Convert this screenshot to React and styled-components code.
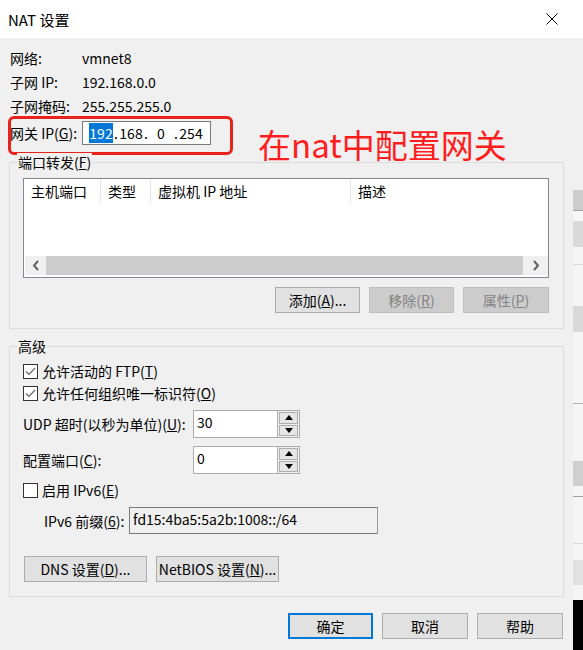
import React from 'react';
import styled, { createGlobalStyle } from 'styled-components';

const FONT = '"Noto Sans CJK SC", "Liberation Sans", sans-serif';

const GlobalStyle = createGlobalStyle`
  html, body {
    margin: 0;
    padding: 0;
    background: #f0f0f0;
  }
  body {
    font-family: ${FONT};
    font-size: 14px;
    color: #000;
  }
`;

const Screen = styled.div`
  width: 583px;
  height: 650px;
  display: flex;
  overflow: hidden;
`;

const Dialog = styled.div`
  width: 573px;
  display: flex;
  flex-direction: column;
  background: #f0f0f0;
`;

const TitleBar = styled.div`
  height: 38px;
  flex: 0 0 38px;
  background: #fff;
  display: flex;
  align-items: center;
  justify-content: space-between;
  padding: 0 15px 0 8px;
  box-sizing: border-box;
`;

const Title = styled.div`
  font-size: 15px;
  line-height: 20px;
  padding-top: 1px;
`;

const CloseIcon = styled.svg`
  width: 12px;
  height: 12px;
  display: block;
`;

const Body = styled.div`
  position: relative;
  flex: 1;
  display: flex;
  flex-direction: column;
  padding: 8px 9px 0 9px;
`;

const InfoRow = styled.div`
  display: flex;
  align-items: center;
  height: 24px;
  padding-left: 1px;
  line-height: 20px;
`;

const InfoLabel = styled.div`
  width: 72px;
  flex: 0 0 72px;
`;

const GatewayRow = styled(InfoRow)`
  margin-top: 3px;
`;

const IpField = styled.div`
  width: 129px;
  height: 24px;
  box-sizing: border-box;
  border: 1px solid #7a7a7a;
  background: #fff;
  display: flex;
  align-items: center;
  padding-left: 6px;
`;

const Octet = styled.span`
  width: 24px;
  text-align: center;
`;

const Dot = styled.span`
  width: 6px;
  text-align: center;
`;

const Selected = styled.span`
  background: #0078d7;
  color: #fff;
`;

const Highlight = styled.div`
  position: absolute;
  left: 8px;
  top: 78px;
  width: 225px;
  height: 39px;
  box-sizing: border-box;
  border: 3px solid #e8231c;
  border-radius: 6px;
`;

const Note = styled.div`
  position: absolute;
  left: 258px;
  top: 90px;
  font-size: 33px;
  line-height: 33px;
  color: #ff1d1d;
  white-space: nowrap;
`;

const Group = styled.div`
  position: relative;
  margin-top: 17px;
  border: 1px solid #dcdcdc;
  padding: ${(p) => p.$pad};
  display: flex;
  flex-direction: column;
`;

const GroupTitle = styled.div`
  position: absolute;
  top: -10px;
  left: 7px;
  padding: 0 1px;
  background: #f0f0f0;
  line-height: 18px;
`;

const ListView = styled.div`
  height: 100px;
  box-sizing: border-box;
  border: 1px solid #828790;
  background: #fff;
  display: flex;
  flex-direction: column;
`;

const Header = styled.div`
  height: 24px;
  display: flex;
`;

const HeadCell = styled.div`
  width: ${(p) => (p.$w ? `${p.$w}px` : 'auto')};
  flex: ${(p) => (p.$w ? `0 0 ${p.$w}px` : '1')};
  box-sizing: border-box;
  border-right: ${(p) => (p.$w ? '1px solid #e5e5e5' : 'none')};
  padding-left: 7px;
  display: flex;
  align-items: center;
  white-space: nowrap;
`;

const ListSpacer = styled.div`
  flex: 1;
`;

const ScrollBar = styled.div`
  height: 19px;
  margin: 0 0 2px 1px;
  display: flex;
`;

const ScrollArrow = styled.div`
  width: ${(p) => p.$w}px;
  background: #f0f0f0;
  display: flex;
  align-items: center;
  justify-content: center;
`;

const ScrollThumb = styled.div`
  flex: 1;
  background: #cdcdcd;
`;

const ButtonRow = styled.div`
  margin-top: ${(p) => p.$mt || 0}px;
  display: flex;
  justify-content: ${(p) => p.$justify || 'flex-end'};
  gap: 9px;
  padding: ${(p) => p.$pad || '0'};
`;

const Button = styled.button`
  width: ${(p) => p.$w}px;
  height: 26px;
  box-sizing: border-box;
  margin: 0;
  padding: 0;
  font-family: ${FONT};
  font-size: 14px;
  line-height: 20px;
  color: ${(p) => (p.disabled ? '#838383' : '#000')};
  background: ${(p) => (p.disabled ? '#cccccc' : '#e1e1e1')};
  border: ${(p) =>
    p.$primary ? '2px solid #0078d7' : p.disabled ? '1px solid #bfbfbf' : '1px solid #adadad'};
  display: flex;
  align-items: center;
  justify-content: center;
`;

const CheckRow = styled.label`
  display: flex;
  align-items: center;
  height: 22px;
  gap: 4px;
  margin-top: ${(p) => p.$mt || 0}px;
  line-height: 20px;
`;

const Box = styled.span`
  width: 15px;
  height: 15px;
  box-sizing: border-box;
  border: 1px solid #333;
  background: #fff;
  display: flex;
  align-items: center;
  justify-content: center;
`;

const FieldRow = styled.div`
  display: flex;
  align-items: center;
  margin-top: ${(p) => p.$mt}px;
  padding-left: ${(p) => p.$indent || 0}px;
  line-height: 20px;
`;

const FieldLabel = styled.div`
  width: ${(p) => p.$w}px;
  flex: 0 0 ${(p) => p.$w}px;
  white-space: nowrap;
`;

const SpinBox = styled.div`
  width: 107px;
  height: 28px;
  box-sizing: border-box;
  border: 1px solid #adadad;
  display: flex;
  background: #f0f0f0;
`;

const SpinInput = styled.div`
  flex: 1;
  background: #fff;
  border-right: 1px solid #adadad;
  padding: 1px 0 0 3px;
`;

const SpinButtons = styled.div`
  width: 21px;
  display: flex;
  flex-direction: column;
  gap: 1px;
  padding: 1px;
  box-sizing: border-box;
`;

const SpinButton = styled.div`
  flex: 1;
  border: 1px solid #adadad;
  background: #e6e6e6;
  display: flex;
  align-items: center;
  justify-content: center;
`;

const PrefixBox = styled.div`
  width: 249px;
  height: 27px;
  box-sizing: border-box;
  border: 1px solid #7a7a7a;
  border-right-color: #9a9a9a;
  background: #f0f0f0;
  padding: 1px 3px;
  white-space: nowrap;
`;

const Backdrop = styled.div`
  width: 10px;
  display: flex;
  flex-direction: column;
`;

const Strip = styled.div`
  height: ${(p) => p.$h}px;
  flex: 0 0 ${(p) => p.$h}px;
  background: ${(p) => p.$c};
`;

const strips = [
  [38, '#ffffff'],
  [152, '#f0f0f0'],
  [20, '#cdcdcd'],
  [1, '#a0a0a0'],
  [10, '#f7f7f7'],
  [26, '#d9d9d9'],
  [17, '#f5f5f5'],
  [1, '#dcdcdc'],
  [41, '#f5f5f5'],
  [26, '#d9d9d9'],
  [71, '#f5f5f5'],
  [1, '#b0b0b0'],
  [57, '#f5f5f5'],
  [25, '#cfcfcf'],
  [10, '#f5f5f5'],
  [1, '#a0a0a0'],
  [46, '#f5f5f5'],
  [1, '#dcdcdc'],
  [16, '#f5f5f5'],
  [25, '#e1e1e1'],
  [15, '#f5f5f5'],
  [50, '#000000'],
];

const Chevron = ({ dir }) => (
  <svg width="8" height="11" viewBox="0 0 8 11">
    <polyline
      points={dir === 'left' ? '6,1 2,5.5 6,10' : '2,1 6,5.5 2,10'}
      fill="none"
      stroke="#606060"
      strokeWidth="2"
    />
  </svg>
);

const Tri = ({ up }) => (
  <svg width="8" height="5" viewBox="0 0 8 5">
    <polygon points={up ? '0,5 8,5 4,0' : '0,0 8,0 4,5'} fill="#000" />
  </svg>
);

const Check = ({ on }) =>
  on ? (
    <svg width="13" height="13" viewBox="0 0 13 13">
      <polyline points="2,6.5 5,9.5 11,3" fill="none" stroke="#666" strokeWidth="1.2" />
    </svg>
  ) : null;

const Spin = ({ value }) => (
  <SpinBox>
    <SpinInput>{value}</SpinInput>
    <SpinButtons>
      <SpinButton>
        <Tri up />
      </SpinButton>
      <SpinButton>
        <Tri />
      </SpinButton>
    </SpinButtons>
  </SpinBox>
);

export default function App() {
  return (
    <>
      <GlobalStyle />
      <Screen>
        <Dialog>
          <TitleBar>
            <Title>NAT 设置</Title>
            <CloseIcon viewBox="0 0 12 12">
              <path d="M0.5 0.5 L11.5 11.5 M11.5 0.5 L0.5 11.5" stroke="#000" strokeWidth="1" />
            </CloseIcon>
          </TitleBar>
          <Body>
            <InfoRow>
              <InfoLabel>网络:</InfoLabel>
              <span>vmnet8</span>
            </InfoRow>
            <InfoRow>
              <InfoLabel>子网 IP:</InfoLabel>
              <span>192.168.0.0</span>
            </InfoRow>
            <InfoRow>
              <InfoLabel>子网掩码:</InfoLabel>
              <span>255.255.255.0</span>
            </InfoRow>
            <GatewayRow>
              <InfoLabel>
                网关 IP(<u>G</u>):
              </InfoLabel>
              <IpField>
                <Octet>
                  <Selected>192</Selected>
                </Octet>
                <Dot>.</Dot>
                <Octet>168</Octet>
                <Dot>.</Dot>
                <Octet>0</Octet>
                <Dot>.</Dot>
                <Octet>254</Octet>
              </IpField>
            </GatewayRow>
            <Highlight />
            <Note>在nat中配置网关</Note>

            <Group $pad="15px 14px 15px 13px">
              <GroupTitle>
                端口转发(<u>F</u>)
              </GroupTitle>
              <ListView>
                <Header>
                  <HeadCell $w={77}>主机端口</HeadCell>
                  <HeadCell $w={50}>类型</HeadCell>
                  <HeadCell $w={200}>虚拟机 IP 地址</HeadCell>
                  <HeadCell>描述</HeadCell>
                </Header>
                <ListSpacer />
                <ScrollBar>
                  <ScrollArrow $w={21}>
                    <Chevron dir="left" />
                  </ScrollArrow>
                  <ScrollThumb />
                  <ScrollArrow $w={25}>
                    <Chevron dir="right" />
                  </ScrollArrow>
                </ScrollBar>
              </ListView>
              <ButtonRow $mt={9}>
                <Button $w={85}>
                  添加(<u>A</u>)...
                </Button>
                <Button $w={85} disabled>
                  移除(<u>R</u>)
                </Button>
                <Button $w={86} disabled>
                  属性(<u>P</u>)
                </Button>
              </ButtonRow>
            </Group>

            <Group $pad="13px 14px 14px 13px">
              <GroupTitle>高级</GroupTitle>
              <CheckRow>
                <Box>
                  <Check on />
                </Box>
                <span>
                  允许活动的 FTP(<u>T</u>)
                </span>
              </CheckRow>
              <CheckRow>
                <Box>
                  <Check on />
                </Box>
                <span>
                  允许任何组织唯一标识符(<u>O</u>)
                </span>
              </CheckRow>
              <FieldRow $mt={6}>
                <FieldLabel $w={170}>
                  UDP 超时(以秒为单位)(<u>U</u>):
                </FieldLabel>
                <Spin value="30" />
              </FieldRow>
              <FieldRow $mt={8}>
                <FieldLabel $w={170}>
                  配置端口(<u>C</u>):
                </FieldLabel>
                <Spin value="0" />
              </FieldRow>
              <CheckRow $mt={5}>
                <Box />
                <span>
                  启用 IPv6(<u>E</u>)
                </span>
              </CheckRow>
              <FieldRow $mt={6} $indent={21}>
                <FieldLabel $w={85}>
                  IPv6 前缀(<u>6</u>):
                </FieldLabel>
                <PrefixBox>fd15:4ba5:5a2b:1008::/64</PrefixBox>
              </FieldRow>
              <ButtonRow $mt={22} $justify="flex-start" $pad="0 0 0 1px">
                <Button $w={123}>
                  DNS 设置(<u>D</u>)...
                </Button>
                <Button $w={123}>
                  NetBIOS 设置(<u>N</u>)...
                </Button>
              </ButtonRow>
            </Group>

            <ButtonRow $mt={16} $pad="0 1px 0 0">
              <Button $w={85} $primary>
                确定
              </Button>
              <Button $w={86}>取消</Button>
              <Button $w={86}>帮助</Button>
            </ButtonRow>
          </Body>
        </Dialog>
        <Backdrop>
          {strips.map(([h, c], i) => (
            <Strip key={i} $h={h} $c={c} />
          ))}
        </Backdrop>
      </Screen>
    </>
  );
}
